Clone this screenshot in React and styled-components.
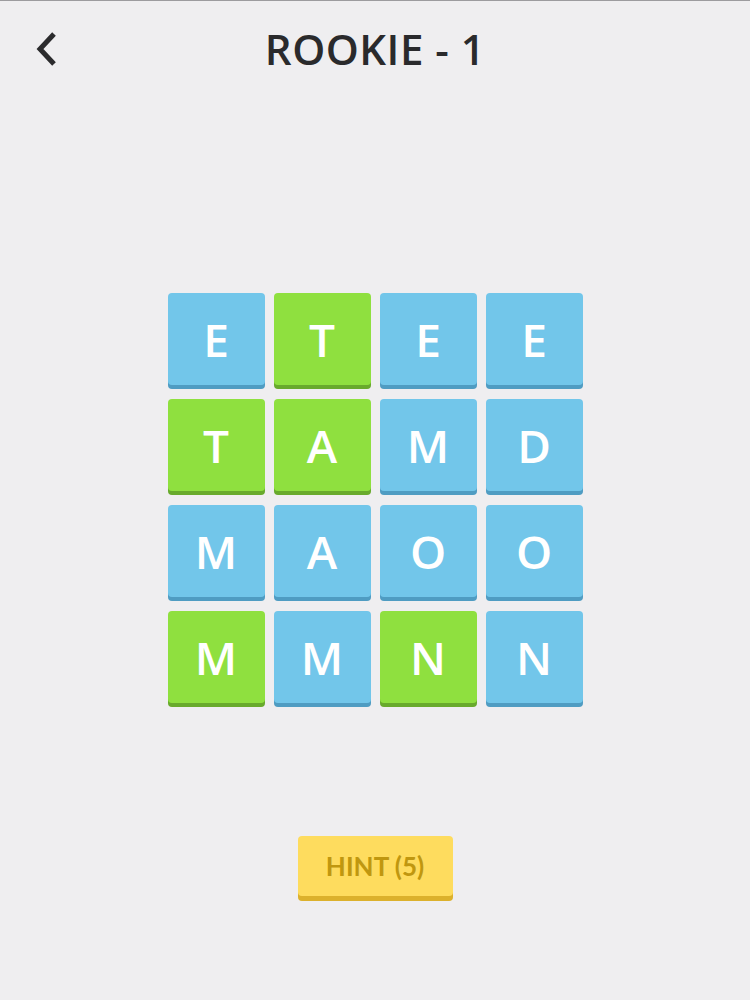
import React from 'react'
import styled, { createGlobalStyle } from 'styled-components'

const GlobalStyle = createGlobalStyle`
	html, body {
		margin: 0;
		padding: 0;
		background: #efeef0;
	}
`

const board = [
	[['E', 'b'], ['T', 'g'], ['E', 'b'], ['E', 'b']],
	[['T', 'g'], ['A', 'g'], ['M', 'b'], ['D', 'b']],
	[['M', 'b'], ['A', 'b'], ['O', 'b'], ['O', 'b']],
	[['M', 'g'], ['M', 'b'], ['N', 'g'], ['N', 'b']],
]

const colors = {
	b: { face: '#72c6ea', edge: '#4f9cc2' },
	g: { face: '#8fe03f', edge: '#68aa2c' },
}

export default function App() {
	return (
		<Page>
			<GlobalStyle />
			<Header>
				<BackBtn aria-label="back">
					<svg width="26" height="36" viewBox="0 0 26 36">
						<path d="M20 3 L6 18 L20 33" fill="none" stroke="#2b2b2d" strokeWidth="5" strokeLinejoin="miter" />
					</svg>
				</BackBtn>
				<Title>ROOKIE - 1</Title>
				<span />
			</Header>
			<Board>
				{board.map((row, i) =>
					row.map(([letter, c], j) => (
						<Tile key={i + '-' + j} tone={c}>{letter}</Tile>
					))
				)}
			</Board>
			<HintBtn>HINT (5)</HintBtn>
		</Page>
	)
}

const Page = styled.div`
	box-sizing: border-box;
	height: 1000px;
	border-top: 1px solid #9c9b9e;
	display: flex;
	flex-direction: column;
	align-items: center;
	font-family: "Open Sans", "Noto Sans", sans-serif;
`

const Header = styled.div`
	width: 100%;
	height: 95px;
	display: grid;
	grid-template-columns: 1fr auto 1fr;
	align-items: center;
	padding: 0 0 0 34px;
	box-sizing: border-box;
`

const BackBtn = styled.button`
	justify-self: start;
	background: none;
	border: none;
	padding: 0;
	display: flex;
	cursor: pointer;
	&:focus {
		outline: none;
	}
`

const Title = styled.h1`
	margin: 0;
	font-size: 42px;
	font-weight: 600;
	color: #2a2a2c;
	letter-spacing: 0.5px;
	transform: translateX(-17px);
`

const Board = styled.div`
	margin-top: 197px;
	display: grid;
	grid-template-columns: repeat(4, 97px);
	column-gap: 9px;
	row-gap: 14px;
`

const Tile = styled.div`
	height: 92px;
	border-radius: 4px;
	background: ${props => colors[props.tone].face};
	box-shadow: 0 4px 0 ${props => colors[props.tone].edge};
	color: #fff;
	font-size: 46px;
	font-weight: 600;
	display: flex;
	align-items: center;
	justify-content: center;
`

const HintBtn = styled.button`
	margin-top: 133px;
	width: 155px;
	height: 60px;
	border: none;
	border-radius: 4px;
	background: #fedc5e;
	box-shadow: 0 5px 0 #dcb12c;
	color: #c0970f;
	font-family: "Lato", "Open Sans", sans-serif;
	font-size: 26px;
	font-weight: 700;
	cursor: pointer;
	&:focus {
		outline: none;
	}
`
